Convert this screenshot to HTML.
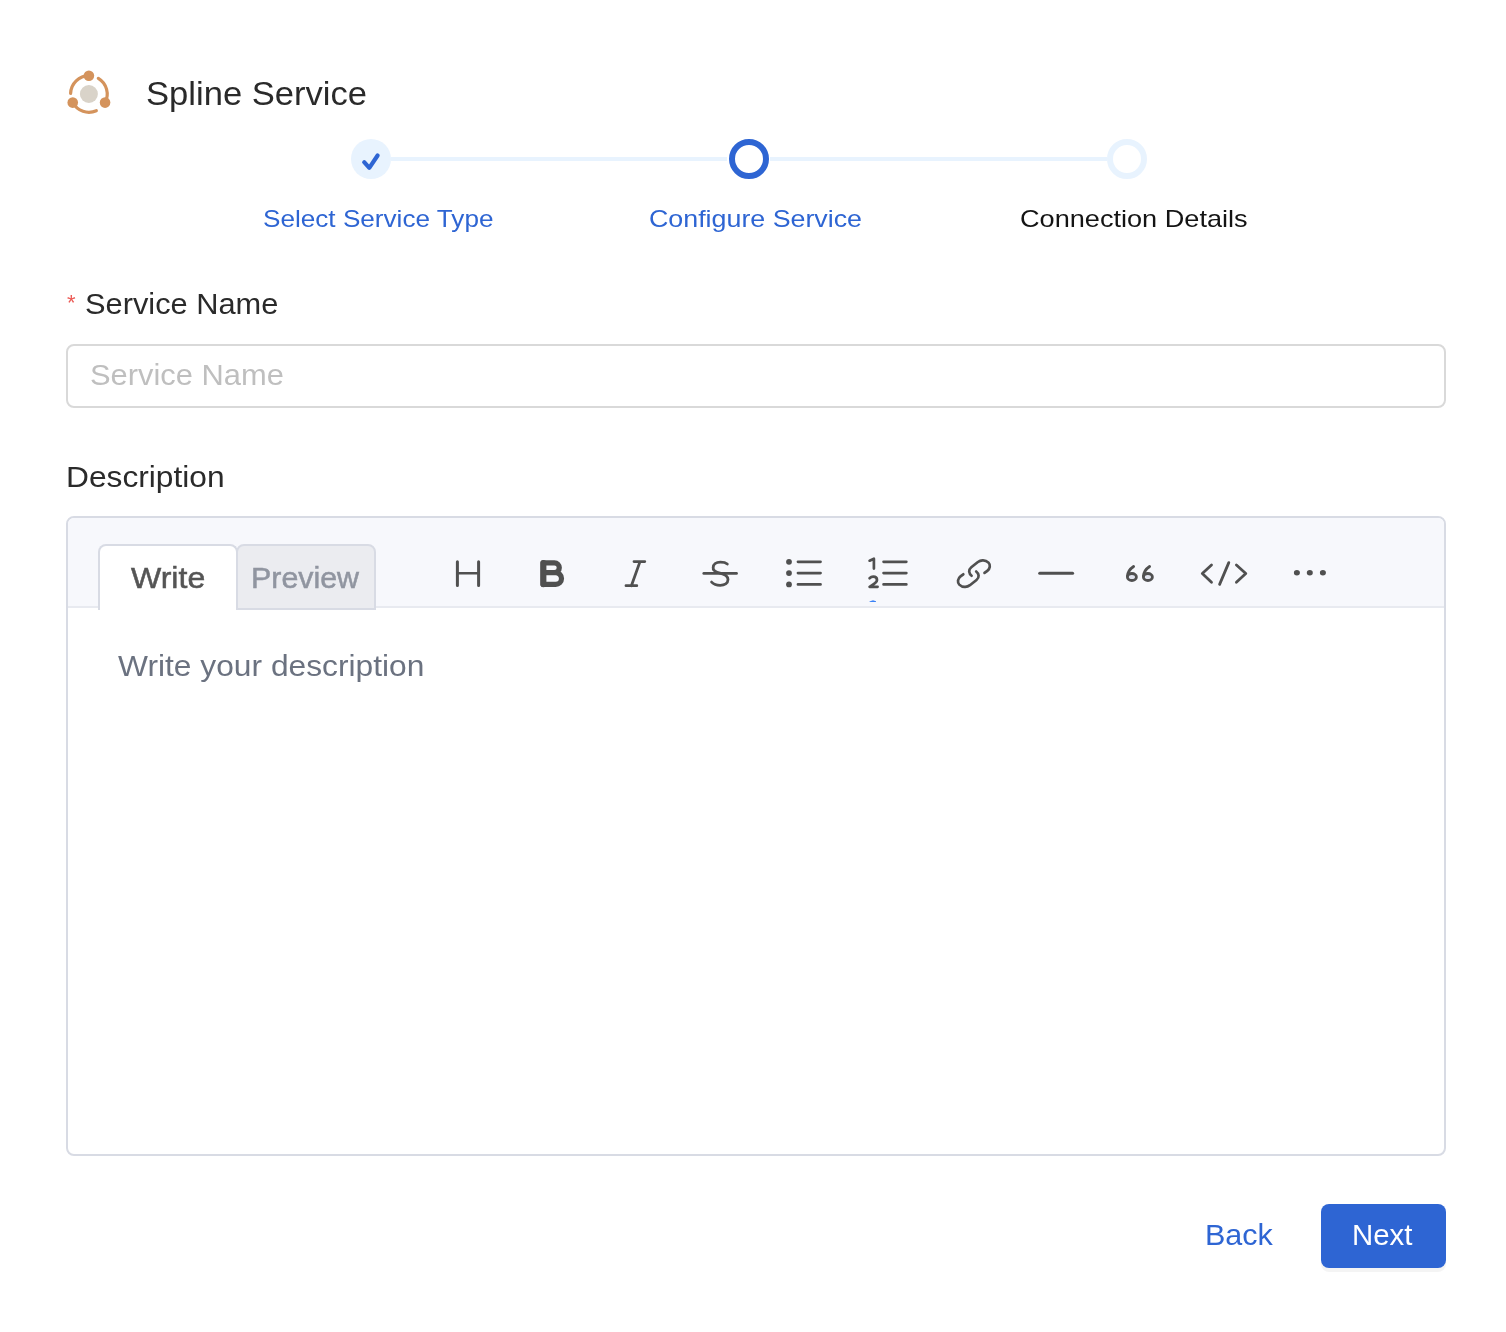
<!DOCTYPE html>
<html>
<head>
<meta charset="utf-8">
<style>
html,body{margin:0;padding:0;background:#fff;width:1506px;height:1332px;overflow:hidden;}
body{position:relative;font-family:"Liberation Sans",sans-serif;}
.t{position:absolute;white-space:nowrap;line-height:1;will-change:transform;}
.abs{position:absolute;box-sizing:border-box;}
</style>
</head>
<body>
<!-- header -->
<svg class="abs" style="left:60px;top:64px" width="60" height="60" viewBox="0 0 60 60" id="logo">
<path d="M28.90 11.70 A18.3 18.3 0 0 0 10.61 29.36" fill="none" stroke="#d4935c" stroke-width="3.2" stroke-linecap="round"/>
<circle cx="28.90" cy="11.70" r="5.3" fill="#d4935c"/>
<path d="M45.06 38.59 A18.3 18.3 0 0 0 38.33 14.31" fill="none" stroke="#d4935c" stroke-width="3.2" stroke-linecap="round"/>
<circle cx="45.06" cy="38.59" r="5.3" fill="#d4935c"/>
<path d="M12.74 38.59 A18.3 18.3 0 0 0 36.34 46.72" fill="none" stroke="#d4935c" stroke-width="3.2" stroke-linecap="round"/>
<circle cx="12.74" cy="38.59" r="5.3" fill="#d4935c"/>
<circle cx="28.90" cy="30.00" r="9" fill="#d9d3c9"/>
</svg>
<div class="t" id="title" style="left:145.67px;top:77.00px;font-size:33px;color:#2a2a2a;transform:scaleX(1.0479);transform-origin:0 0;">Spline Service</div>

<!-- stepper -->
<div class="abs" style="left:391px;top:157px;width:336px;height:4px;background:#e8f3fe;"></div>
<div class="abs" style="left:770px;top:157px;width:337px;height:4px;background:#e8f3fe;"></div>
<div class="abs" style="left:351px;top:139px;width:40px;height:40px;border-radius:50%;background:#e8f3fe;"></div>
<svg class="abs" style="left:351px;top:139px" width="40" height="40" viewBox="0 0 40 40"><path d="M13.2 23.2 L18.3 28.8 L26.6 16.5" fill="none" stroke="#2e65d3" stroke-width="4.2" stroke-linecap="round" stroke-linejoin="round"/></svg>
<div class="abs" style="left:729px;top:139px;width:40px;height:40px;border-radius:50%;border:6px solid #2e65d3;background:#fff;"></div>
<div class="abs" style="left:1107px;top:139px;width:40px;height:40px;border-radius:50%;border:6px solid #e8f3fe;background:#fff;"></div>
<div class="t" id="s1" style="left:262.50px;top:207.00px;font-size:24px;color:#2e65d3;transform:scaleX(1.0888);transform-origin:0 0;">Select Service Type</div>
<div class="t" id="s2" style="left:649.02px;top:207.00px;font-size:24px;color:#2e65d3;transform:scaleX(1.1167);transform-origin:0 0;">Configure Service</div>
<div class="t" id="s3" style="left:1020.07px;top:207.00px;font-size:24px;color:#141414;transform:scaleX(1.1299);transform-origin:0 0;">Connection Details</div>

<!-- service name -->
<div class="t" id="ast" style="left:67px;top:292px;font-size:22px;color:#ec5b56;">*</div>
<div class="t" id="lbl1" style="left:85.04px;top:290px;font-size:29px;color:#2a2a2a;transform:scaleX(1.0618);transform-origin:0 0;">Service Name</div>
<div class="abs" style="left:66px;top:344px;width:1380px;height:64px;border:2px solid #d9d9d9;border-radius:8px;"></div>
<div class="t" id="ph1" style="left:90.20px;top:361px;font-size:29px;color:#bfbfbf;transform:scaleX(1.0647);transform-origin:0 0;">Service Name</div>

<!-- description -->
<div class="t" id="lbl2" style="left:65.69px;top:463px;font-size:29px;color:#2a2a2a;transform:scaleX(1.0937);transform-origin:0 0;">Description</div>
<div class="abs" style="left:66px;top:516px;width:1380px;height:640px;border:2px solid #d8dbe4;border-radius:8px;overflow:hidden;">
  <div class="abs" style="left:0;top:0;width:1376px;height:90px;background:#f7f8fc;border-bottom:2px solid #e8eaf0;"></div>
</div>
<div class="abs" style="left:98px;top:544px;width:140px;height:66px;background:#fff;border:2px solid #d8dbe4;border-bottom:none;border-radius:8px 8px 0 0;"></div>
<div class="abs" style="left:236px;top:544px;width:140px;height:66px;background:#ebecf0;border:2px solid #d8dbe4;border-radius:8px 8px 0 0;"></div>
<div class="t" id="tab1" style="left:130.62px;top:564px;font-size:29px;color:#555;-webkit-text-stroke:0.5px #555;transform:scaleX(1.1054);transform-origin:0 0;">Write</div>
<div class="t" id="tab2" style="left:251.41px;top:564px;font-size:29px;color:#9095a0;-webkit-text-stroke:0.5px #9095a0;transform:scaleX(1.0477);transform-origin:0 0;">Preview</div>

<!-- toolbar icons -->
<svg class="abs" id="icons" style="left:0;top:0" width="1506" height="640" viewBox="0 0 1506 640">
<g fill="none" stroke="#505050" stroke-width="3" stroke-linecap="round" stroke-linejoin="round">
<!-- H -->
<path d="M457.4 561.8 V585.5 M478.6 561.8 V585.5"/><path d="M457.4 573.25 H478.6" stroke-width="2.6"/>
<!-- B -->
<path d="M543 572.7 V562.9 H554.4 A4.9 4.9 0 0 1 554.4 572.7 H543 V584.3 H555.7 A5.8 5.8 0 0 0 555.7 572.7 H554" stroke-width="5.2"/><path d="M543.4 563 V584.2" stroke-width="6"/>
<!-- I -->
<path d="M634 561.6 H644.8 M626 585.7 H636.8 M640 561.6 L631.4 585.7" stroke-width="2.8"/>
<!-- strike -->
<path d="M703.8 573.4 H736.5" stroke-width="2.8"/>
<path d="M727.3 564.0 C725.6 562.6 723 562.2 720.4 562.2 C716 562.2 713.2 564.4 713.2 567.6 C712.6 571 716 572.2 720 573.1 C725 574.2 728 576.2 728 579.6 C728 583.2 724.5 585.3 720.2 585.3 C716.4 585.3 713.4 584 711.6 582.1" stroke-width="2.8"/>
<!-- ul -->
<path d="M798 561.8 H820.5 M798 573.05 H820.5 M798 584.4 H820.5" stroke-width="2.8"/>
<!-- ol -->
<path d="M883.6 561.8 H906.3 M883.6 573.05 H906.3 M883.6 584.4 H906.3" stroke-width="2.8"/>
<path d="M869.6 560.7 L873.9 558.7 V568.6" stroke-width="2.7"/>
<path d="M869.6 578.3 C870.8 577.1 872 576.7 873.2 576.7 C875.6 576.7 877 578.1 877 580 C877 582 875.2 583.3 869.6 586.8 H877.6" stroke-width="2.7"/>
<!-- link -->
<g stroke-width="2.7">
<path d="M984.5 572.9 L987.3 570.8 C990.2 568.6 990.6 564.8 988.5 562.6 C986.6 560.7 984.3 560.2 982.6 560.3 C980.9 560.4 979.4 560.9 977.9 562.0 L971.3 567.2 C969.6 568.6 969.1 570.4 969.2 571.6 C969.4 573.4 970.3 574.7 971.6 575.7"/>
<path d="M984.5 572.9 L987.3 570.8 C990.2 568.6 990.6 564.8 988.5 562.6 C986.6 560.7 984.3 560.2 982.6 560.3 C980.9 560.4 979.4 560.9 977.9 562.0 L971.3 567.2 C969.6 568.6 969.1 570.4 969.2 571.6 C969.4 573.4 970.3 574.7 971.6 575.7" transform="rotate(180 973.9 573.6)"/>
</g>
<!-- hr -->
<path d="M1039.7 573.2 H1072.6"/>
<!-- quote -->
<ellipse cx="1131.9" cy="577.0" rx="4.5" ry="3.5" fill="#e0e3ee" stroke-width="2.8"/>
<ellipse cx="1147.9" cy="577.0" rx="4.5" ry="3.5" fill="#e0e3ee" stroke-width="2.8"/>
<path d="M1127.5 576 C1127.8 571.5 1130.5 568.6 1133.6 566.5" stroke-width="2.8"/>
<path d="M1143.5 576 C1143.8 571.5 1146.5 568.6 1149.6 566.5" stroke-width="2.8"/>
<!-- code -->
<path d="M1211.5 565 L1202.3 573.5 L1211.5 582.3 M1228.8 562.6 L1219.6 584.4 M1236.4 565 L1245.8 573.5 L1236.4 582.3" stroke-width="2.8"/>
</g>
<g fill="#505050">
<circle cx="789" cy="561.8" r="2.9"/><circle cx="789" cy="573.05" r="2.9"/><circle cx="789" cy="584.4" r="2.9"/>
<ellipse cx="1296.9" cy="572.8" rx="3" ry="2.7"/><ellipse cx="1309.8" cy="572.8" rx="3" ry="2.7"/><ellipse cx="1322.9" cy="572.8" rx="3" ry="2.7"/>
</g>
<path d="M869.5 601.5 L873 600.2 L876 601.2 L876 602 L869.5 602 Z" fill="#3b82f6"/>
</svg>

<div class="t" id="ph2" style="left:118.30px;top:652px;font-size:29px;color:#6b7280;transform:scaleX(1.0947);transform-origin:0 0;">Write your description</div>

<!-- buttons -->
<div class="t" id="back" style="left:1205.26px;top:1221px;font-size:29px;color:#2e65d3;transform:scaleX(1.0530);transform-origin:0 0;">Back</div>
<div class="abs" style="left:1321px;top:1204px;width:125px;height:64px;background:#2e65d3;border-radius:8px;box-shadow:0 4px 0 rgba(0,0,0,0.045);"></div>
<div class="t" id="next" style="left:1352.11px;top:1221px;font-size:29px;color:#fff;transform:scaleX(1.0134);transform-origin:0 0;">Next</div>
</body>
</html>
